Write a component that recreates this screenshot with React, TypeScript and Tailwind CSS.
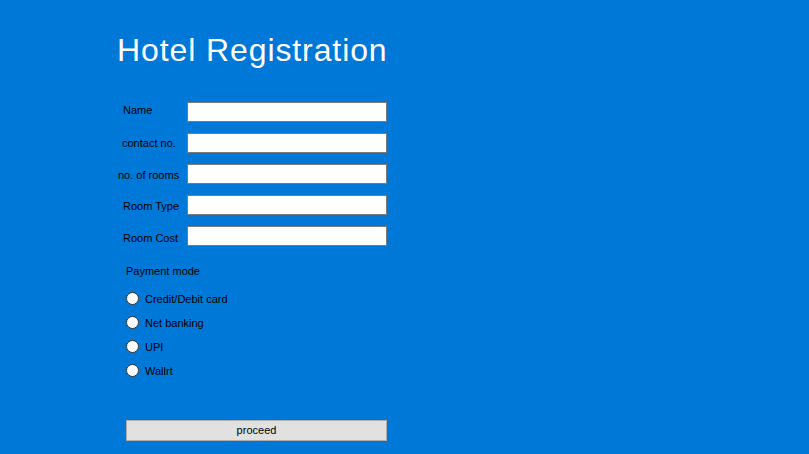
import React from 'react'

const fields = [
  { label: 'Name', labelPad: 'pl-[6px]', labelShift: '-mt-[4px]' },
  { label: 'contact no.', labelPad: 'pl-[5px]', labelShift: 'mt-[0px]' },
  { label: 'no. of rooms', labelPad: 'pl-[1px]', labelShift: 'mt-[3px]' },
  { label: 'Room Type', labelPad: 'pl-[6px]', labelShift: 'mt-[3px]' },
  { label: 'Room Cost', labelPad: 'pl-[6px]', labelShift: 'mt-[4px]' },
]

const modes = ['Credit/Debit card', 'Net banking', 'UPI', 'Wallrt']

export default function App() {
  return (
    <div
      className="w-[809px] h-[454px] bg-[#0078d7] overflow-hidden pl-[117px] pt-[33px] text-black"
      style={{ fontFamily: '"Liberation Sans", Arial, sans-serif' }}
    >
      <h1 className="text-[32px] leading-[34px] text-white tracking-[0.9px]">Hotel Registration</h1>

      <div className="mt-[35px] flex flex-col gap-[11px] w-[270px]">
        {fields.map((f) => (
          <div key={f.label} className="flex items-center h-[20px]">
            <span className={`w-[70px] shrink-0 text-[11px] whitespace-nowrap ${f.labelPad} ${f.labelShift}`}>
              {f.label}
            </span>
            <input
              type="text"
              className="flex-1 min-w-0 w-0 h-[20px] bg-white border border-[#7a7a7a] outline-none"
            />
          </div>
        ))}
      </div>

      <div className="pl-[9px] mt-[18px]">
        <div className="text-[11px] leading-[14px]">Payment mode</div>
        <div className="mt-[14px] flex flex-col gap-[11px]">
          {modes.map((m) => (
            <label key={m} className="flex items-center gap-[6px] h-[13px]">
              <span className="w-[13px] h-[13px] rounded-full bg-white border border-[#333] shrink-0" />
              <span className="text-[11px] leading-[14px]">{m}</span>
            </label>
          ))}
        </div>
      </div>

      <button className="ml-[9px] mt-[43px] w-[261px] h-[21px] bg-[#e1e1e1] border border-[#adadad] text-[11px] leading-none">
        proceed
      </button>
    </div>
  )
}
